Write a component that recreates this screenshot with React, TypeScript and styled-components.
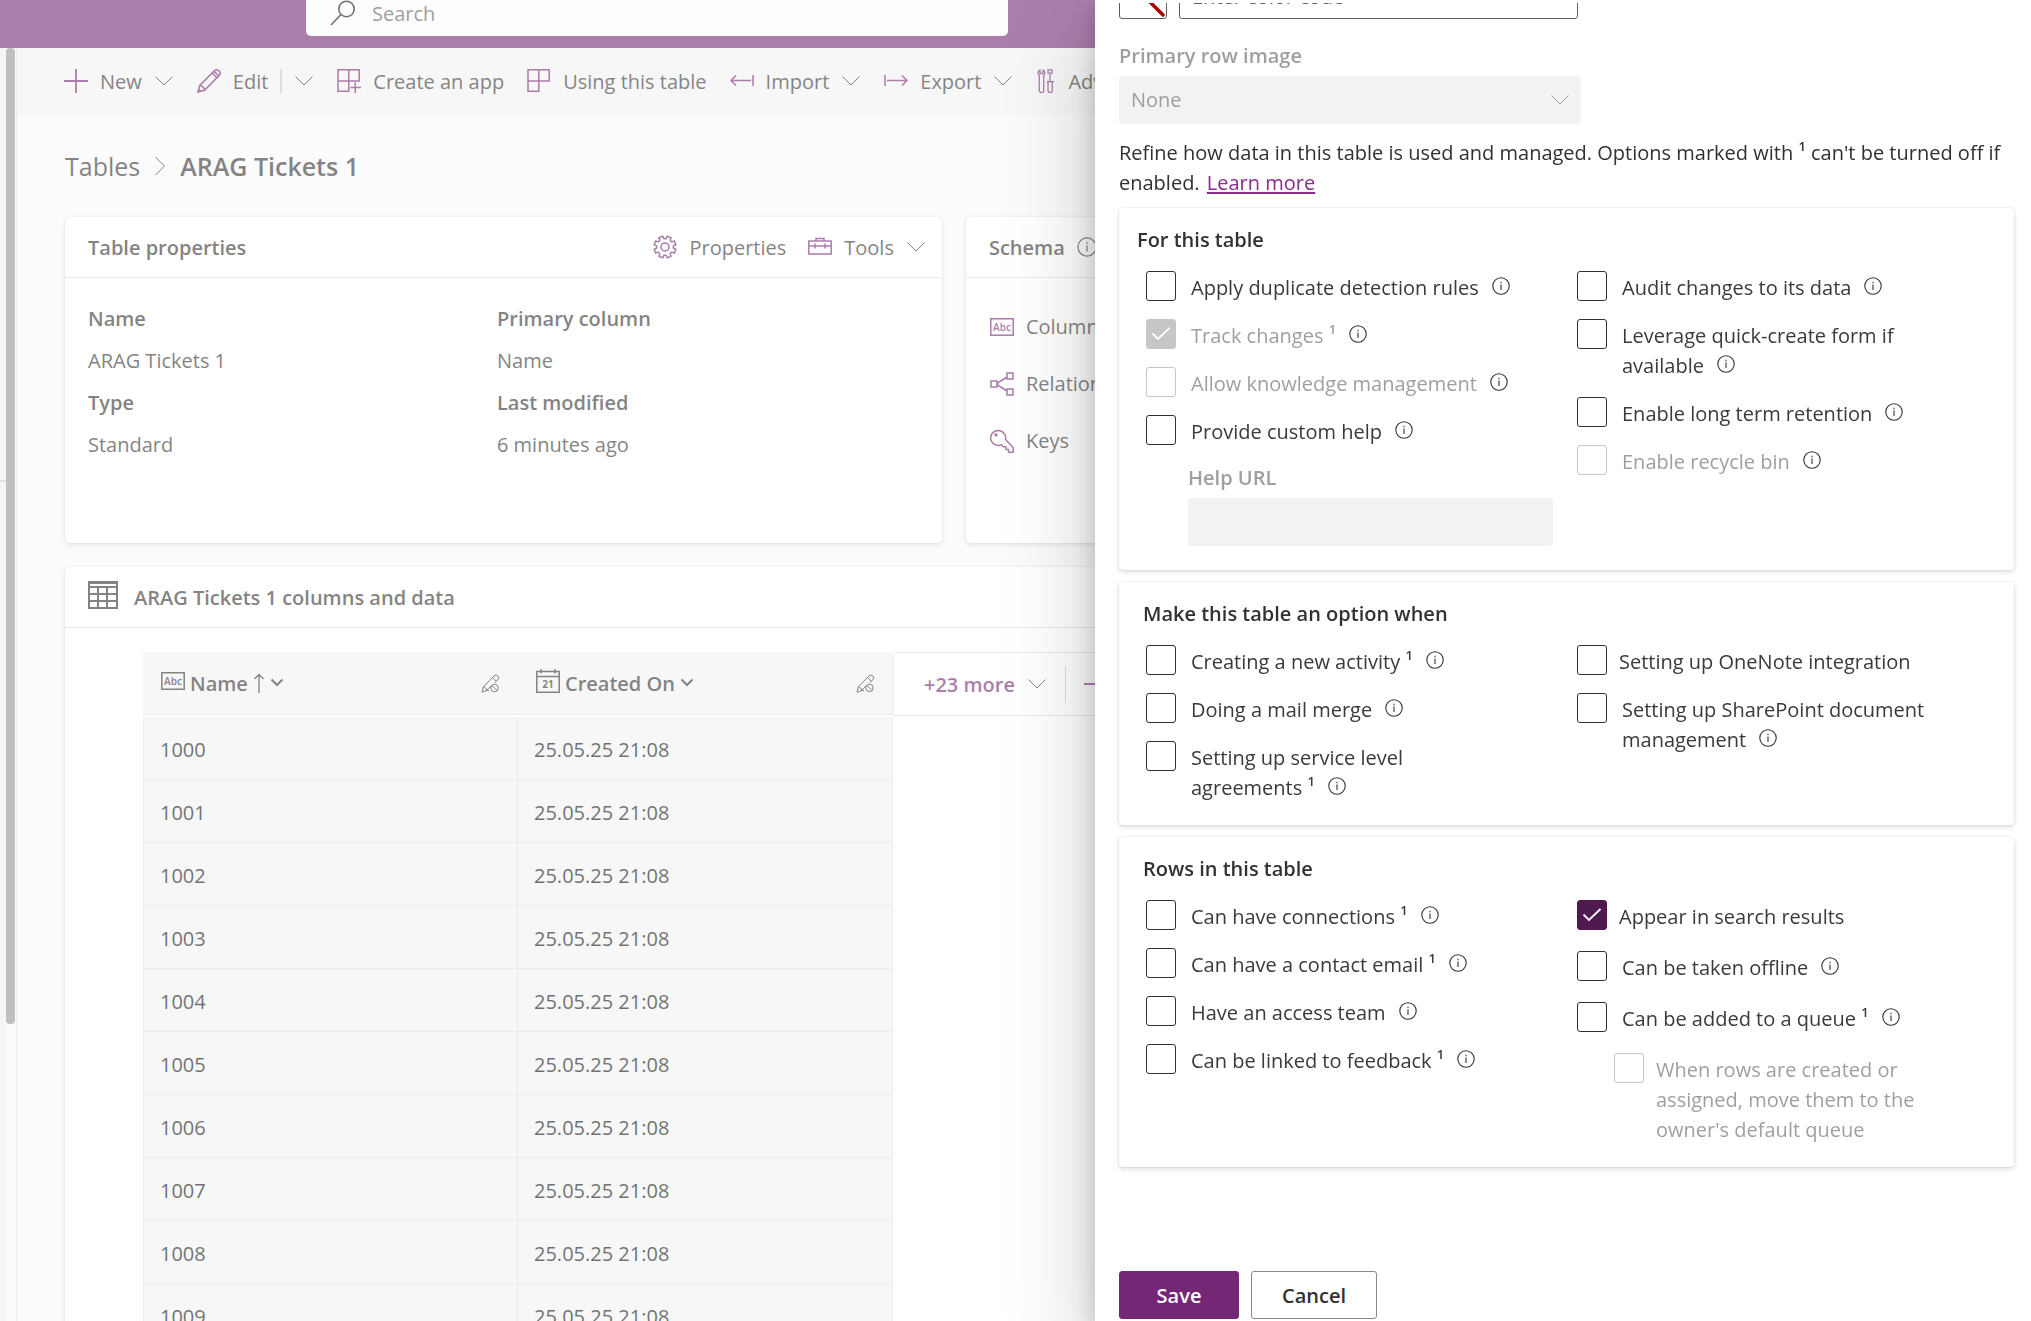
import React, { useId, useState } from 'react';
import type { ReactNode } from 'react';
import styled, { createGlobalStyle, css } from 'styled-components';

const color = {
  brand: '#742774',
  brandDark: '#4f1a50',
  link: '#8a2a8c',
  text: '#323130',
  label: '#3b3a39',
  disabled: '#a19f9d',
  disabledBorder: '#c8c6c4',
  field: '#f3f2f1',
  line: '#e1dfdd',
};

const GlobalStyle = createGlobalStyle`
  *, *::before, *::after { box-sizing: border-box; }
  html, body, #root { height: 100%; }
  body {
    margin: 0;
    overflow: hidden;
    font-family: "Open Sans", "Noto Sans", sans-serif;
    font-size: 20px;
    line-height: 30px;
    color: ${color.text};
    background: #f8f8f8;
  }
  button, input, select { font: inherit; color: inherit; }
  h1, h2, h3, p { margin: 0; font-size: 20px; font-weight: 600; }
  svg { display: block; flex: none; }
`;

/* ---------- icons ---------- */

const Stroke = styled.svg<{ $tone?: string; $weight?: number }>`
  fill: none;
  stroke: ${(p) => p.$tone ?? color.brand};
  stroke-width: ${(p) => p.$weight ?? 1.5};
`;

const Chevron = ({ tone = color.text, weight = 1 }: { tone?: string; weight?: number }) => (
  <Stroke width="20" height="20" viewBox="0 0 20 20" $tone={tone} $weight={weight} aria-hidden>
    <path d="M1.5 5.5 10 14l8.500-8.500" />
  </Stroke>
);

const SmallChevron = () => (
  <Stroke width="14" height="14" viewBox="0 0 14 14" $tone={color.text} $weight={2} aria-hidden>
    <path d="M1.500 3.500 7 9l5.500-5.500" />
  </Stroke>
);

const CrumbChevron = () => (
  <Stroke width="12" height="20" viewBox="0 0 12 20" $tone={color.text} $weight={1} aria-hidden>
    <path d="M1.500 1 10.500 10l-9 9" />
  </Stroke>
);

const SearchIcon = () => (
  <Stroke width="26" height="26" viewBox="0 0 26 26" $tone="#111" $weight={1.6} aria-hidden>
    <circle cx="16.500" cy="9" r="7.700" />
    <path d="M11 14.500 1 25" />
  </Stroke>
);

const PlusIcon = () => (
  <Stroke width="24" height="24" viewBox="0 0 24 24" $weight={1.8} aria-hidden>
    <path d="M12 0v24M0 12h24" />
  </Stroke>
);

const PencilIcon = () => (
  <Stroke width="24" height="24" viewBox="0 0 24 24" aria-hidden>
    <path d="M1 23l1.700-6.500L17.300 1.900a3.200 3.200 0 0 1 4.700 4.700L7.500 21.300zM15.200 4l4.700 4.700M17.200 2.500l4.300 4.300M2.700 16.500c2.600.2 4.400 1.800 4.800 4.800M2 20.500 3.500 22" />
  </Stroke>
);

const CreateAppIcon = () => (
  <Stroke width="24" height="24" viewBox="0 0 24 24" aria-hidden>
    <path d="M1 .8h21.200V12H1zM11.800.8v21.500H1V12M18.300 13.500V24M13.500 18.500H24" />
  </Stroke>
);

const UsingTableIcon = () => (
  <Stroke width="24" height="24" viewBox="0 0 24 24" aria-hidden>
    <path d="M1 .8h21.200V12H1zM11.800.8v21.500H1V12" />
  </Stroke>
);

const ImportIcon = () => (
  <Stroke width="24" height="24" viewBox="0 0 24 24" aria-hidden>
    <path d="M1 11.500h20M6 6.500l-5 5 5 5M23 6v11" />
  </Stroke>
);

const ExportIcon = () => (
  <Stroke width="24" height="24" viewBox="0 0 24 24" aria-hidden>
    <path d="M3 11.500h20M18 6.500l5 5-5 5M1 6v11" />
  </Stroke>
);

const AdvancedIcon = () => (
  <Stroke width="20" height="24" viewBox="0 0 20 24" $weight={1.300} aria-hidden>
    <path d="M4 1.200v3.300h3V1.200a3.200 3.200 0 0 1 .7 5.400V21.500a2.200 2.200 0 0 1-4.400 0V6.600A3.200 3.200 0 0 1 4 1.200z" />
    <path d="M12 .8h4v3.400h-4zM14 4.200v8M11 12.600h7M12 12.600v9a2.100 2.100 0 0 0 4.200 0v-9" />
  </Stroke>
);

const gearPath = (() => {
  const pts: string[] = [];
  const step = (Math.PI * 2) / 8;
  for (let i = 0; i < 8; i += 1) {
    const a = i * step - Math.PI / 2;
    [
      [-0.26, 8.400],
      [-0.19, 11.100],
      [0.19, 11.100],
      [0.26, 8.400],
    ].forEach(([da, r]) => {
      pts.push(`${(12 + Math.cos(a + da) * r).toFixed(2)} ${(12 + Math.sin(a + da) * r).toFixed(2)}`);
    });
  }
  return `M${pts.join('L')}Z`;
})();

const GearIcon = () => (
  <Stroke width="24" height="24" viewBox="0 0 24 24" strokeLinejoin="round" aria-hidden>
    <path d={gearPath} transform="rotate(22.500 12 12)" />
    <circle cx="12" cy="12" r="4" />
  </Stroke>
);

const ToolboxIcon = () => (
  <Stroke width="24" height="24" viewBox="0 0 24 24" aria-hidden>
    <path d="M.8 6h22.400v13H.8zM.8 11h22.400M8 6V3.500h8V6M7 8.500v5M17 8.500v5" />
  </Stroke>
);

const RelationIcon = () => (
  <Stroke width="24" height="24" viewBox="0 0 24 24" aria-hidden>
    <path d="M1 9h6v6H1zM17 1h6v6h-6zM17 17h6v6h-6zM7 11.500l10-6.500M7 12.500l10 6.500" />
  </Stroke>
);

const KeyIcon = () => (
  <Stroke width="24" height="24" viewBox="0 0 24 24" strokeLinejoin="round" aria-hidden>
    <path d="M15.500 10.500l7.700 8.200v4.500h-4.700v-2.700h-2.500v-2.700h-2.700l-1.800-2.200A7.500 7.500 0 1 1 15.500 10.500z" />
    <circle cx="6" cy="6" r="1" />
  </Stroke>
);

const GlyphText = styled.text<{ $tone: string; $size: number; $bold?: boolean }>`
  fill: ${(p) => p.$tone};
  stroke: none;
  font-size: ${(p) => p.$size}px;
  font-weight: ${(p) => (p.$bold ? 700 : 600)};
  text-anchor: middle;
`;

const AbcIcon = ({ tone = color.brand }: { tone?: string }) => (
  <Stroke width="24" height="18" viewBox="0 0 24 18" $tone={tone} aria-hidden>
    <path d="M.8.8h22.400v16.400H.8z" />
    <GlyphText x="12" y="13" $tone={tone} $size={10}>Abc</GlyphText>
  </Stroke>
);

const CalendarIcon = () => (
  <Stroke width="24" height="24" viewBox="0 0 24 24" $tone={color.text} aria-hidden>
    <path d="M.8 2.500h22.400v20.700H.8zM.8 7.500h22.400M5 0v4.500M19 0v4.500" />
    <GlyphText x="12" y="19" $tone={color.text} $size={10} $bold>21</GlyphText>
  </Stroke>
);

const GridIcon = () => (
  <Stroke width="30" height="30" viewBox="0 0 30 30" $tone={color.text} $weight={2} aria-hidden>
    <path d="M1 2h28v26H1zM0 3h30M1 7h28M1 14h28M1 21h28M10 7v21M19 7v21" />
  </Stroke>
);

const SortUpIcon = () => (
  <Stroke width="12" height="20" viewBox="0 0 12 20" $tone={color.text} $weight={1.300} aria-hidden>
    <path d="M6 20V2M1.500 6 6 1.500 10.500 6" />
  </Stroke>
);

const LockedEditIcon = () => (
  <Stroke width="19" height="19" viewBox="0 0 19 19" $tone={color.text} $weight={1} aria-hidden>
    <path d="M8 16.500l-1.700 0L1 18.200l1.300-5.200L13 2a2.600 2.600 0 0 1 3.900 3.700L13.500 9M11.500 3.500 15.200 7.200M2.300 13c1.800.2 3 1.300 3.500 3.300L10 12" />
    <circle cx="13.500" cy="14" r="3.700" />
    <path d="M11 11.500l5 5" />
  </Stroke>
);

const InfoSvg = styled(Stroke)<{ $inline?: boolean }>`
  ${(p) =>
    p.$inline &&
    css`
      display: inline-block;
      margin-left: 13px;
      vertical-align: 0;
    `}
`;

const InfoIcon = ({ size = 18, inline = false }: { size?: number; inline?: boolean }) => (
  <InfoSvg width={size} height={size} viewBox="0 0 18 18" $tone={color.text} $weight={1.100} $inline={inline} role="img" aria-label="Info">
    <circle cx="9" cy="9" r="8.200" />
    <path d="M9 7.500v5.500M9 4.800v1.500" />
  </InfoSvg>
);

const Tick = styled.svg`
  grid-area: 1 / 1;
  fill: none;
  stroke: #fff;
  stroke-width: 1.8;
  pointer-events: none;
`;

/* ---------- page behind the panel ---------- */

const Page = styled.div`
  display: flex;
  flex-direction: column;
  height: 100%;
  overflow: hidden;
`;

const TopBar = styled.header`
  flex: none;
  height: 48px;
  padding-left: 306px;
  background: ${color.brand};
`;

const SearchBox = styled.label`
  display: flex;
  align-items: center;
  gap: 16px;
  width: 702px;
  height: 36px;
  padding: 0 24px 10px;
  border-radius: 0 0 5px 5px;
  background: #fcfcfc;
`;

const SearchInput = styled.input`
  flex: 1;
  border: 0;
  padding: 2px 0 0;
  outline: 0;
  background: transparent;
  &::placeholder { color: #605e5c; opacity: 1; }
`;

const Body = styled.div`
  display: flex;
  flex: 1;
  min-height: 0;
`;

const Rail = styled.div`
  flex: none;
  width: 6px;
  padding-top: 432px;
  background: #efeeed;
`;

const RailLine = styled.hr`
  margin: 0;
  border: 0;
  border-top: 2px solid #d2d0ce;
`;

const Track = styled.div`
  flex: none;
  width: 11px;
  border-right: 1px solid ${color.line};
  background: #f8f8f8;
`;

const Thumb = styled.div`
  width: 9px;
  height: calc(77% - 4px);
  border-radius: 4px;
  background: #949494;
`;

const Main = styled.main`
  flex: 1;
  min-width: 0;
`;

const Toolbar = styled.nav`
  display: flex;
  align-items: center;
  gap: 23px;
  height: 66px;
  padding-left: 47px;
  background: #f2f2f2;
`;

const PlainButton = styled.button`
  display: flex;
  align-items: center;
  gap: 12px;
  padding: 0;
  border: 0;
  background: transparent;
  white-space: nowrap;
`;

const Caption = styled.span`
  padding-top: 2px;
`;

const Raised = styled.span`
  padding-bottom: 4px;
`;

const SplitBar = styled.span`
  width: 2px;
  height: 24px;
  background: #c8c6c4;
`;

const Content = styled.div`
  padding: 34px 42px 0 48px;
`;

const Breadcrumb = styled.nav`
  display: flex;
  align-items: center;
  gap: 14px;
  margin-bottom: 33px;
  line-height: 36px;
  font-size: 25px;
`;

const Crumb = styled.a`
  color: ${color.text};
  text-decoration: none;
`;

const CrumbTitle = styled.h1`
  font-size: 25px;
`;

const Cards = styled.div`
  display: grid;
  grid-template-columns: 6fr 7fr;
  grid-auto-rows: minmax(326px, auto);
  gap: 24px;
`;

const Card = styled.section<{ $wide?: boolean }>`
  min-width: 0;
  border-radius: 5px;
  background: #fff;
  box-shadow: 0 2px 5px rgba(0, 0, 0, 0.14), 0 0 2px rgba(0, 0, 0, 0.12);
  ${(p) => p.$wide && 'grid-column: 1 / -1;'}
`;

const CardHead = styled.header<{ $gap?: number }>`
  display: flex;
  align-items: center;
  gap: ${(p) => p.$gap ?? 24}px;
  height: 61px;
  padding: 0 16px 0 23px;
  border-bottom: 1px solid ${color.line};
  h2 { padding-top: 2px; }
`;

const Actions = styled.div`
  display: flex;
  gap: 22px;
  margin-left: auto;
`;

const Facts = styled.dl`
  display: grid;
  grid-template-columns: 1fr 1fr;
  margin: 0;
  padding: 20px 36px 0 23px;
  line-height: 42px;
`;

const Fact = styled.div`
  dt { font-weight: 600; }
  dd { margin: 0; }
`;

const SchemaList = styled.div`
  display: flex;
  flex-direction: column;
  align-items: flex-start;
  padding: 20px 24px 0;
`;

const SchemaLink = styled(PlainButton)`
  height: 57px;
`;

const GridArea = styled.div`
  display: flex;
  align-items: flex-start;
  padding: 24px 0 0 78px;
`;

const DataTable = styled.table`
  flex: none;
  width: 750px;
  table-layout: fixed;
  border-spacing: 0;
`;

const Th = styled.th`
  padding: 0 0 2px;
  font-weight: 600;
  text-align: left;
`;

const ThInner = styled.div`
  display: flex;
  align-items: center;
  gap: 5px;
  height: 63px;
  padding: 0 18px;
  border-bottom: 1px solid ${color.line};
  background: #f2f2f2;
`;

const Push = styled.span`
  margin-left: auto;
`;

const Td = styled.td`
  height: 63px;
  padding: 3px 17px 0 16px;
  border-right: 1px solid ${color.line};
  border-bottom: 1px solid ${color.line};
  background: #f2f2f2;
  color: #111;
  &:first-child { border-left: 1px solid ${color.line}; }
`;

const MoreBox = styled.div`
  display: flex;
  flex: 1;
  align-items: center;
  gap: 18px;
  height: 64px;
  padding-left: 30px;
  border: 1px solid ${color.line};
  border-radius: 6px 0 0 0;
`;

const MoreButton = styled(PlainButton)`
  font-weight: 600;
  color: ${color.brand};
`;

const ThinBar = styled.span`
  width: 1px;
  height: 37px;
  background: #c8c6c4;
`;

/* ---------- side panel ---------- */

const Scrim = styled.div`
  position: fixed;
  inset: 0;
  display: flex;
  justify-content: flex-end;
  background: rgba(255, 255, 255, 0.4);
`;

const Panel = styled.aside`
  display: flex;
  flex-direction: column;
  width: 936px;
  height: 100%;
  padding: 3px 17px 2px 24px;
  background: #fff;
  box-shadow: 0 38px 86px rgba(0, 0, 0, 0.22), 0 7px 22px rgba(0, 0, 0, 0.18);
`;

const Scroller = styled.div`
  flex: 1;
  min-height: 0;
  margin: 0 -17px 0 -24px;
  padding: 0 17px 0 24px;
  overflow: hidden;
`;

const ColorRow = styled.div`
  display: flex;
  gap: 12px;
  margin: -32px 0 22px;
`;

const Swatch = styled.button`
  width: 48px;
  height: 48px;
  padding: 0;
  border: 1px solid #605e5c;
  border-radius: 3px;
  background: #fff;
`;

const ColorInput = styled.input`
  width: 399px;
  height: 48px;
  padding: 2px 12px 0;
  border: 1px solid #605e5c;
  border-radius: 3px;
  background: #fff;
  &::placeholder { color: #605e5c; opacity: 1; }
`;

const FieldLabel = styled.label`
  display: block;
  margin-bottom: 5px;
  font-weight: 600;
  color: ${color.disabled};
`;

const SelectWrap = styled.div`
  display: grid;
  align-items: center;
  width: 462px;
  margin-bottom: 14px;
  svg {
    grid-area: 1 / 1;
    justify-self: end;
    margin-right: 11px;
    pointer-events: none;
  }
`;

const SelectBox = styled.select`
  grid-area: 1 / 1;
  appearance: none;
  height: 48px;
  padding: 0 12px;
  border: 0;
  border-radius: 3px;
  background: ${color.field};
  color: ${color.disabled};
  opacity: 1;
`;

const Intro = styled.p`
  margin-bottom: 10px;
  font-weight: 400;
`;

const Link = styled.a`
  margin-left: 2px;
  color: ${color.link};
  text-decoration: underline;
  text-decoration-thickness: 2px;
  text-underline-offset: 2px;
`;

const Sup = styled.sup`
  font-size: 13px;
  font-weight: 600;
  line-height: 0;
  vertical-align: 9px;
`;

const Group = styled.section`
  margin-bottom: 12px;
  padding: 17px 6px 22px 27px;
  border-radius: 4px;
  background: #fff;
  box-shadow: 0 2px 5px rgba(0, 0, 0, 0.14), 0 0 2px rgba(0, 0, 0, 0.12);
`;

const GroupTitle = styled.h2<{ $outdent?: boolean }>`
  margin: 0 0 16px ${(p) => (p.$outdent ? -9 : -3)}px;
`;

const Columns = styled.div`
  display: grid;
  grid-template-columns: 1fr 1fr;
`;

const Column = styled.div<{ $gap?: number }>`
  display: flex;
  flex-direction: column;
  gap: ${(p) => p.$gap ?? 16}px;
`;

const OptionRow = styled.label<{ $tight?: boolean; $nested?: boolean; $off?: boolean }>`
  display: flex;
  align-items: flex-start;
  gap: ${(p) => (p.$tight ? 12 : 15)}px;
  max-width: ${(p) => (p.$nested ? 339 : 365)}px;
  margin-left: ${(p) => (p.$nested ? 37 : 0)}px;
  color: ${(p) => (p.$off ? color.disabled : color.label)};
`;

const OptionText = styled.span`
  padding-top: 2px;
`;

const BoxWrap = styled.span`
  display: grid;
  flex: none;
`;

const Box = styled.input`
  grid-area: 1 / 1;
  appearance: none;
  width: 30px;
  height: 30px;
  margin: 0;
  border: 1px solid ${color.text};
  border-radius: 3px;
  background: #fff;
  &:checked { border-color: ${color.brandDark}; background: ${color.brandDark}; }
  &:disabled { border-color: ${color.disabledBorder}; }
  &:checked:disabled { background: ${color.disabledBorder}; }
`;

const HelpField = styled.div`
  margin: 0 24px 2px 42px;
`;

const HelpInput = styled.input`
  display: block;
  width: 100%;
  height: 48px;
  padding: 0 12px;
  border: 0;
  border-radius: 3px;
  background: ${color.field};
`;

const Footer = styled.footer`
  display: flex;
  gap: 12px;
`;

const ActionButton = styled.button<{ $primary?: boolean }>`
  min-width: 120px;
  height: 48px;
  padding: 2px 30px 0;
  border: 1px solid ${(p) => (p.$primary ? color.brand : '#8a8886')};
  border-radius: 3px;
  background: ${(p) => (p.$primary ? color.brand : '#fff')};
  color: ${(p) => (p.$primary ? '#fff' : color.text)};
  font-weight: 600;
`;

type OptionProps = {
  children: ReactNode;
  once?: boolean;
  info?: boolean;
  checked?: boolean;
  disabled?: boolean;
  nested?: boolean;
};

function Option({ children, once, info = true, checked = false, disabled, nested }: OptionProps) {
  const [on, setOn] = useState(checked);
  return (
    <OptionRow $tight={!info} $nested={nested} $off={disabled}>
      <BoxWrap>
        <Box type="checkbox" checked={on} disabled={disabled} onChange={(e) => setOn(e.target.checked)} />
        {on && (
          <Tick width="30" height="30" viewBox="0 0 30 30" aria-hidden>
            <path d="M6.500 14.500l5.500 5.500L23.500 9" />
          </Tick>
        )}
      </BoxWrap>
      <OptionText>
        {children}
        {once && <> <Sup>1</Sup></>}
        {info && <InfoIcon inline />}
      </OptionText>
    </OptionRow>
  );
}

const rows = Array.from({ length: 12 }, (_, i) => ({ name: String(1000 + i), created: '25.05.25 21:08' }));

export default function App() {
  const imageId = useId();
  const helpId = useId();
  return (
    <>
      <GlobalStyle />
      <Page>
        <TopBar>
          <SearchBox>
            <SearchIcon />
            <SearchInput placeholder="Search" aria-label="Search" />
          </SearchBox>
        </TopBar>
        <Body>
          <Rail><RailLine /></Rail>
          <Track><Thumb /></Track>
          <Main>
            <Toolbar>
              <PlainButton><PlusIcon /><Caption>New</Caption><Chevron /></PlainButton>
              <PlainButton><PencilIcon /><Caption>Edit</Caption><SplitBar /><Chevron /></PlainButton>
              <PlainButton><CreateAppIcon /><Caption>Create an app</Caption></PlainButton>
              <PlainButton><UsingTableIcon /><Caption>Using this table</Caption></PlainButton>
              <PlainButton><ImportIcon /><Caption>Import</Caption><Chevron /></PlainButton>
              <PlainButton><ExportIcon /><Caption>Export</Caption><Chevron /></PlainButton>
              <PlainButton><AdvancedIcon /><Caption>Advanced</Caption></PlainButton>
            </Toolbar>
            <Content>
              <Breadcrumb>
                <Crumb href="#tables">Tables</Crumb>
                <CrumbChevron />
                <CrumbTitle>ARAG Tickets 1</CrumbTitle>
              </Breadcrumb>
              <Cards>
                <Card>
                  <CardHead>
                    <h2>Table properties</h2>
                    <Actions>
                      <PlainButton><GearIcon /><Caption>Properties</Caption></PlainButton>
                      <PlainButton><ToolboxIcon /><Caption>Tools</Caption><Chevron /></PlainButton>
                    </Actions>
                  </CardHead>
                  <Facts>
                    <Fact><dt>Name</dt><dd>ARAG Tickets 1</dd></Fact>
                    <Fact><dt>Primary column</dt><dd>Name</dd></Fact>
                    <Fact><dt>Type</dt><dd>Standard</dd></Fact>
                    <Fact><dt>Last modified</dt><dd>6 minutes ago</dd></Fact>
                  </Facts>
                </Card>
                <Card>
                  <CardHead $gap={12}>
                    <h2>Schema</h2>
                    <InfoIcon size={20} />
                  </CardHead>
                  <SchemaList>
                    <SchemaLink><AbcIcon />Columns</SchemaLink>
                    <SchemaLink><RelationIcon />Relationships</SchemaLink>
                    <SchemaLink><KeyIcon />Keys</SchemaLink>
                  </SchemaList>
                </Card>
                <Card $wide>
                  <CardHead $gap={16}>
                    <Raised><GridIcon /></Raised>
                    <h2>ARAG Tickets 1 columns and data</h2>
                  </CardHead>
                  <GridArea>
                    <DataTable>
                      <thead>
                        <tr>
                          <Th>
                            <ThInner>
                              <Raised><AbcIcon tone={color.text} /></Raised>
                              <Caption>Name</Caption>
                              <SortUpIcon />
                              <SmallChevron />
                              <Push><LockedEditIcon /></Push>
                            </ThInner>
                          </Th>
                          <Th>
                            <ThInner>
                              <Raised><CalendarIcon /></Raised>
                              <Caption>Created On</Caption>
                              <SmallChevron />
                              <Push><LockedEditIcon /></Push>
                            </ThInner>
                          </Th>
                        </tr>
                      </thead>
                      <tbody>
                        {rows.map((r) => (
                          <tr key={r.name}><Td>{r.name}</Td><Td>{r.created}</Td></tr>
                        ))}
                      </tbody>
                    </DataTable>
                    <MoreBox>
                      <MoreButton><Caption>+23 more</Caption><Chevron /></MoreButton>
                      <ThinBar />
                      <MoreButton aria-label="Add column"><PlusIcon /></MoreButton>
                    </MoreBox>
                  </GridArea>
                </Card>
              </Cards>
            </Content>
          </Main>
        </Body>
      </Page>

      <Scrim>
        <Panel aria-label="Edit table">
          <Scroller>
            <ColorRow>
              <Swatch aria-label="Color">
                <Stroke width="46" height="46" viewBox="0 0 46 46" $tone="#a80000" $weight={3.500} strokeLinecap="round" aria-hidden>
                  <path d="M3 3l40 40" />
                </Stroke>
              </Swatch>
              <ColorInput placeholder="Enter color code" aria-label="Color code" />
            </ColorRow>
            <FieldLabel htmlFor={imageId}>Primary row image</FieldLabel>
            <SelectWrap>
              <SelectBox id={imageId} disabled defaultValue="None"><option>None</option></SelectBox>
              <Chevron tone={color.disabled} />
            </SelectWrap>
            <Intro>
              Refine how data in this table is used and managed. Options marked with <Sup>1</Sup> can't be turned off if
              enabled. <Link href="#learn">Learn more</Link>
            </Intro>

            <Group>
              <GroupTitle $outdent>For this table</GroupTitle>
              <Columns>
                <Column>
                  <Option>Apply duplicate detection rules</Option>
                  <Option once checked disabled>Track changes</Option>
                  <Option disabled>Allow knowledge management</Option>
                  <Option>Provide custom help</Option>
                  <HelpField>
                    <FieldLabel htmlFor={helpId}>Help URL</FieldLabel>
                    <HelpInput id={helpId} disabled />
                  </HelpField>
                </Column>
                <Column>
                  <Option>Audit changes to its data</Option>
                  <Option>Leverage quick-create form if available</Option>
                  <Option>Enable long term retention</Option>
                  <Option disabled>Enable recycle bin</Option>
                </Column>
              </Columns>
            </Group>

            <Group>
              <GroupTitle>Make this table an option when</GroupTitle>
              <Columns>
                <Column>
                  <Option once>Creating a new activity</Option>
                  <Option>Doing a mail merge</Option>
                  <Option once>Setting up service level agreements</Option>
                </Column>
                <Column>
                  <Option info={false}>Setting up OneNote integration</Option>
                  <Option>Setting up SharePoint document management</Option>
                </Column>
              </Columns>
            </Group>

            <Group>
              <GroupTitle>Rows in this table</GroupTitle>
              <Columns>
                <Column>
                  <Option once>Can have connections</Option>
                  <Option once>Can have a contact email</Option>
                  <Option>Have an access team</Option>
                  <Option once>Can be linked to feedback</Option>
                </Column>
                <Column $gap={19}>
                  <Option info={false} checked>Appear in search results</Option>
                  <Option>Can be taken offline</Option>
                  <Option once>Can be added to a queue</Option>
                  <Option info={false} disabled nested>
                    When rows are created or assigned, move them to the owner's default queue
                  </Option>
                </Column>
              </Columns>
            </Group>
          </Scroller>
          <Footer>
            <ActionButton $primary>Save</ActionButton>
            <ActionButton>Cancel</ActionButton>
          </Footer>
        </Panel>
      </Scrim>
    </>
  );
}
